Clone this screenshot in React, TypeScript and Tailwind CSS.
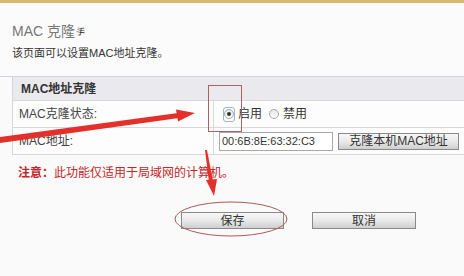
const font = { fontFamily: '"Liberation Sans", "Noto Sans CJK SC", sans-serif' };

const Radio = ({ checked, label }: { checked?: boolean; label: string }) => (
  <label className="flex items-center gap-[3px] text-[12px] leading-[14px] text-[#333]">
    <span
      className={
        checked
          ? 'flex h-[15px] w-[12px] items-center justify-center rounded-[3px] border border-[#9fb4d4]'
          : 'flex h-[15px] w-[12px] items-center justify-center'
      }
    >
      <span className="flex h-[10px] w-[10px] items-center justify-center rounded-full border border-[#a8a8a8] bg-gradient-to-b from-[#e8e8e8] to-[#fdfdfd]">
        {checked && <span className="h-[4px] w-[4px] rounded-full bg-[#333]" />}
      </span>
    </span>
    {label}
  </label>
);

const GrayButton = ({ label, className }: { label: string; className?: string }) => (
  <button
    type="button"
    className={`flex h-[17px] items-center justify-center border border-[#8a8a8a] bg-gradient-to-b from-[#f7f7f7] via-[#e9e9e9] to-[#cfcfcf] text-[12px] leading-[14px] text-[#333] ${className ?? ''}`}
  >
    {label}
  </button>
);

export default function App() {
  return (
    <div className="relative h-[276px] w-[464px] overflow-hidden bg-[#fafafa]" style={font}>
      {/* page title */}
      <div className="border-t-[3px] border-b border-t-[#d6b96c] border-b-[#d4d4dc] bg-[#fbfbfb] px-[12px] pb-[16px] pt-[20px]">
        <div className="flex items-start">
          <span className="text-[14px] leading-[16px] text-[#777]">MAC 克隆</span>
          {/* pen scribble on the screenshot */}
          <span className="ml-[1px] mt-[4px] rotate-[8deg] text-[9px] leading-[10px] text-[#222]">手</span>
        </div>
        <div className="mt-[7px] text-[11px] leading-[14px] text-[#333]">该页面可以设置MAC地址克隆。</div>
      </div>

      {/* settings table */}
      <div className="pl-[12px]">
        <div className="flex h-[24px] items-center border-b border-l border-[#d6d6dc] bg-[#e9e9ee] pl-[8px] text-[12px] font-bold leading-[14px] text-[#333]">
          MAC地址克隆
        </div>
        <div className="flex h-[27px] border-b border-l border-[#d8d8d8] bg-[#fdfdfd]">
          <div className="flex w-[201px] items-center border-r border-[#d8d8d8] pl-[6px] text-[12px] leading-[14px] text-[#444]">
            MAC克隆状态:
          </div>
          <div className="flex items-center gap-[6px] pl-[9px]">
            <Radio checked label="启用" />
            <Radio label="禁用" />
          </div>
        </div>
        <div className="flex h-[27px] border-b border-l border-[#d8d8d8] bg-[#fdfdfd]">
          <div className="flex w-[201px] items-center border-r border-[#d8d8d8] pl-[6px] text-[12px] leading-[14px] text-[#444]">
            MAC地址:
          </div>
          <div className="flex items-center gap-[5px] pl-[5px]">
            <div className="flex h-[19px] w-[114px] items-center border border-[#a9a9a9] bg-white pl-[2px] text-[11px] leading-[13px] text-[#333]">
              00:6B:8E:63:32:C3
            </div>
            <GrayButton label="克隆本机MAC地址" className="w-[121px]" />
          </div>
        </div>
      </div>

      <div className="mt-[11px] pl-[18px] text-[12px] leading-[14px] text-[#c4262a]">
        <span className="font-bold">注意：</span>此功能仅适用于局域网的计算机。
      </div>

      <div className="mt-[32px] flex gap-[28px] pl-[181px]">
        <GrayButton label="保存" className="w-[103px]" />
        <GrayButton label="取消" className="w-[104px]" />
      </div>

      {/* annotations drawn over the screenshot */}
      <div className="absolute left-[208px] top-[85px] h-[47px] w-[34px] border border-[#b06060]" />
      <svg className="absolute left-0 top-0" width="464" height="276" viewBox="0 0 464 276">
        <polygon points="0,137 178,113 179,118 0,143" fill="#e3302a" />
        <polygon points="195,113 176,109.5 178,121.5" fill="#e3302a" />
        <polygon points="205,150 207,150 213,181 209,182" fill="#e3302a" />
        <polygon points="214,196 206,180 217,179" fill="#e3302a" />
        <ellipse cx="231" cy="219" rx="56" ry="17" fill="none" stroke="#a85a5a" strokeWidth="1" />
      </svg>
    </div>
  );
}
